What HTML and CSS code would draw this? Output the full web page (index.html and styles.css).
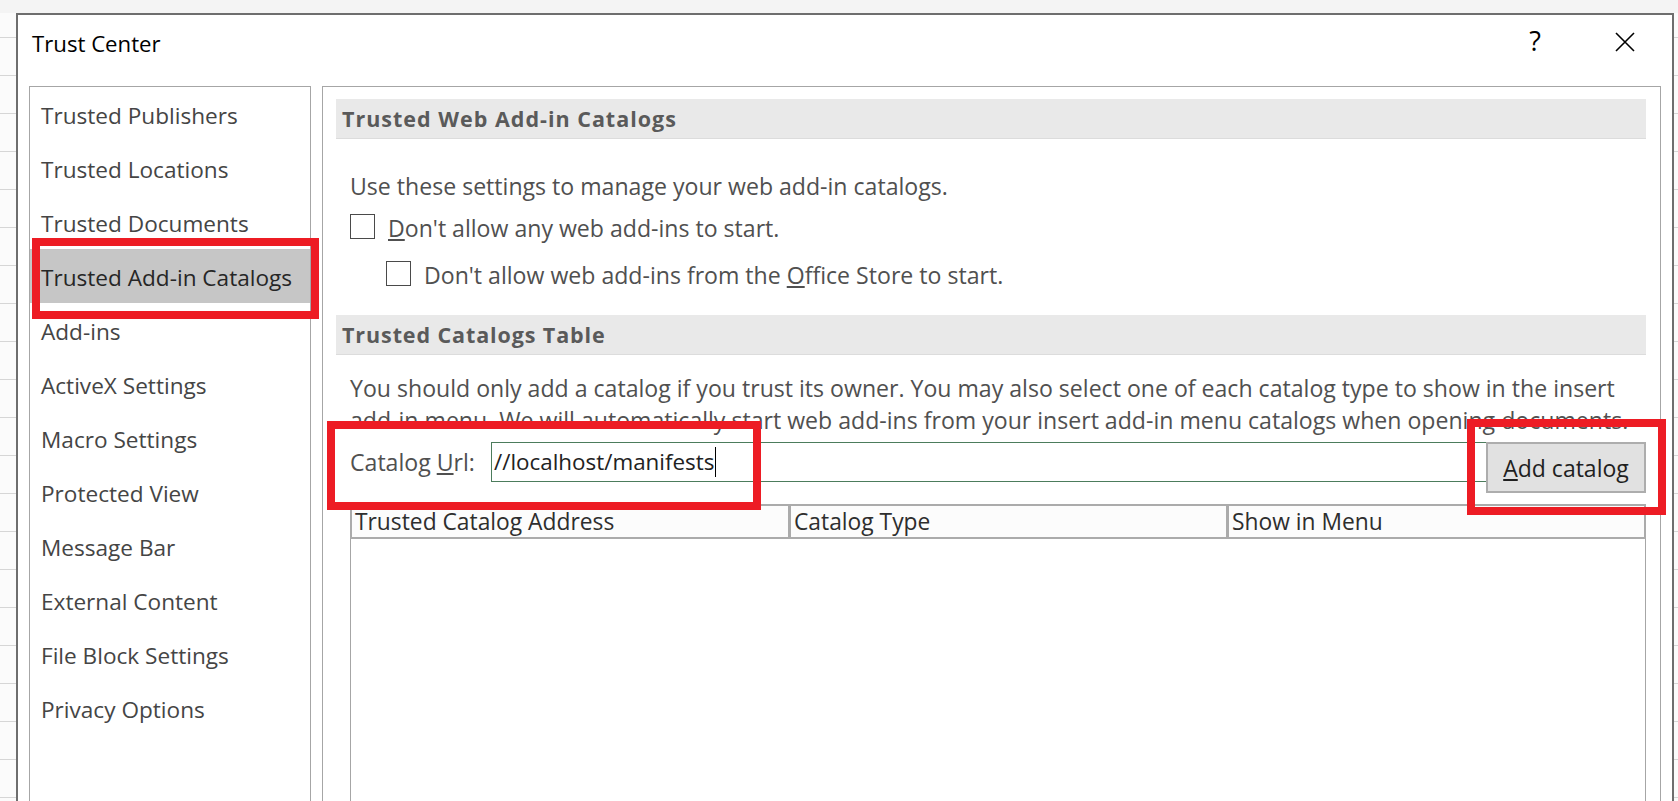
FILE: index.html
```html
<!DOCTYPE html>
<html lang="en">
<head>
<meta charset="utf-8">
<title>Trust Center</title>
<link rel="stylesheet" href="styles.css">
</head>
<body>
<div class="dialog">
  <div class="titlebar">
    <div class="title">Trust Center</div>
    <div class="title-actions">
      <span class="help">?</span>
      <svg class="close" width="20" height="20" viewBox="0 0 20 20"><path d="M1 1 L19 19 M19 1 L1 19" stroke="#000" stroke-width="1.6" fill="none"/></svg>
    </div>
  </div>
  <div class="dialog-body">
    <ul class="sidebar">
      <li class="nav-item">Trusted Publishers</li>
      <li class="nav-item">Trusted Locations</li>
      <li class="nav-item">Trusted Documents</li>
      <li class="nav-item selected">Trusted Add-in Catalogs</li>
      <li class="nav-item">Add-ins</li>
      <li class="nav-item">ActiveX Settings</li>
      <li class="nav-item">Macro Settings</li>
      <li class="nav-item">Protected View</li>
      <li class="nav-item">Message Bar</li>
      <li class="nav-item">External Content</li>
      <li class="nav-item">File Block Settings</li>
      <li class="nav-item">Privacy Options</li>
    </ul>
    <div class="content">
      <div class="section-header">Trusted Web Add-in Catalogs</div>
      <div class="section-body first">
        <p class="intro">Use these settings to manage your web add-in catalogs.</p>
        <label class="check-row">
          <span class="checkbox"></span>
          <span class="check-label"><u>D</u>on't allow any web add-ins to start.</span>
        </label>
        <label class="check-row nested">
          <span class="checkbox"></span>
          <span class="check-label">Don't allow web add-ins from the <u>O</u>ffice Store to start.</span>
        </label>
      </div>
      <div class="section-header second">Trusted Catalogs Table</div>
      <div class="section-body">
        <p class="para">You should only add a catalog if you trust its owner. You may also select one of each catalog type to show in the insert add-in menu. We will automatically start web add-ins from your insert add-in menu catalogs when opening documents.</p>
        <div class="url-row">
          <span class="url-label">Catalog <u>U</u>rl:</span>
          <div class="url-field">//localhost/manifests<span class="caret"></span></div>
          <button class="btn"><u>A</u>dd catalog</button>
        </div>
        <div class="table">
          <div class="table-head">
            <div class="th">Trusted Catalog Address</div>
            <div class="th">Catalog Type</div>
            <div class="th">Show in Menu</div>
          </div>
          <div class="table-body"></div>
        </div>
      </div>
    </div>
  </div>
</div>
<div class="mark mark-nav"></div>
<div class="mark mark-url"></div>
<div class="mark mark-btn"></div>
</body>
</html>
```

FILE: styles.css
```css
* { box-sizing: border-box; }
html, body { margin: 0; padding: 0; }
body {
  width: 1678px;
  height: 801px;
  overflow: hidden;
  position: relative;
  font-family: "Open Sans", "Noto Sans", sans-serif;
  background:
    linear-gradient(to bottom, #f4f4f4 0 13px, transparent 13px),
    repeating-linear-gradient(to bottom, transparent 0 37px, #d6d6d6 37px 38px),
    #fbfbfb;
  padding-top: 13px;
  padding-left: 16px;
}
.dialog {
  width: 1658px;
  height: 830px;
  border: 2px solid #6e6e6e;
  background: #fff;
  display: flex;
  flex-direction: column;
}
.titlebar {
  height: 71px;
  display: flex;
  justify-content: space-between;
  align-items: flex-start;
  padding: 14px 37px 0 14px;
  flex: none;
}
.title {
  font-size: 22.2px;
  line-height: 30px;
  color: #000;
}
.title-actions {
  display: flex;
  align-items: flex-start;
  gap: 74px;
  padding-top: 3px;
}
.help {
  font-size: 27px;
  line-height: 26px;
  color: #000;
  height: 26px;
  margin-top: -4px;
}
.close { display: block; margin-top: 0; }
.dialog-body {
  flex: 1;
  display: flex;
  gap: 11px;
  padding: 0 11px;
  min-height: 0;
}
.sidebar {
  list-style: none;
  margin: 0;
  padding: 0;
  width: 282px;
  flex: none;
  border: 1px solid #a6a6a6;
  border-bottom: none;
}
.nav-item {
  height: 54px;
  padding: 5px 0 0 11px;
  line-height: 48px;
  font-size: 22.6px;
  color: #454545;
  white-space: nowrap;
}
.nav-item.selected {
  background: #c6c6c6;
  color: #262626;
}
.content {
  flex: 1;
  border: 1px solid #a6a6a6;
  border-bottom: none;
  padding: 12px 14px 0 13px;
  display: flex;
  flex-direction: column;
}
.section-header {
  height: 40px;
  line-height: 39px;
  background: #e9e9e9;
  border-bottom: 1px solid #dcdcdc;
  padding-left: 6px;
  font-size: 21.5px;
  letter-spacing: 1px;
  font-weight: 700;
  color: #5a5a5a;
  flex: none;
}
.section-header.second { margin-top: 24px; letter-spacing: 0.9px; }
.section-body {
  padding-left: 14px;
  color: #505050;
  font-size: 23.1px;
}
.intro {
  margin: 31px 0 0 0;
  line-height: 32px;
}
.check-row {
  display: flex;
  align-items: center;
  gap: 13px;
  height: 32px;
  margin-top: 10px;
}
.check-row.nested {
  margin-top: 15px;
  padding-left: 36px;
}
.checkbox {
  width: 25px;
  height: 25px;
  border: 1px solid #4a4a4a;
  background: #fff;
  flex: none;
  margin-top: -3px;
}
.check-label { line-height: 32px; white-space: nowrap; }
.para {
  margin: 17px 0 0 0;
  line-height: 32px;
}
.url-row {
  display: flex;
  align-items: flex-start;
  margin-top: 6px;
}
.url-label {
  width: 141px;
  flex: none;
  line-height: 40px;
}
.url-field {
  flex: 1;
  height: 40px;
  border: 1px solid #4c7c5c;
  border-right: none;
  line-height: 38px;
  padding-left: 2px;
  color: #222;
  font-size: 22.4px;
}
.caret {
  display: inline-block;
  width: 1px;
  height: 30px;
  background: #000;
  vertical-align: -7px;
  margin-left: 1px;
}
.btn {
  width: 160px;
  height: 51px;
  flex: none;
  background: #e1e1e1;
  border: 2px solid #adadad;
  font-family: inherit;
  font-size: 23px;
  color: #1f1f1f;
  padding: 1px 0 0 0;
  line-height: 43px;
  margin: 0;
}
.table {
  margin-top: 11px;
  display: flex;
  flex-direction: column;
  height: 400px;
}
.table-head {
  display: grid;
  grid-template-columns: 439px 438px 1fr;
}
.th {
  height: 35px;
  border: 2px solid #ababab;
  border-right-width: 1px;
  background: #fcfcfc;
  line-height: 32px;
  padding-left: 3px;
  color: #2e2e2e;
  font-size: 22.8px;
  white-space: nowrap;
}
.th + .th { border-left-width: 2px; }
.th:last-child { border-right-width: 2px; }
.table-body {
  flex: 1;
  border-left: 1px solid #a6a6a6;
  border-right: 1px solid #a6a6a6;
}
.mark {
  position: absolute;
  border: 8px solid #ed1c24;
  pointer-events: none;
}
.mark-nav { left: 32px; top: 238px; width: 287px; height: 81px; }
.mark-url { left: 327px; top: 421px; width: 434px; height: 89px; }
.mark-btn { left: 1467px; top: 419px; width: 199px; height: 96px; }
```
